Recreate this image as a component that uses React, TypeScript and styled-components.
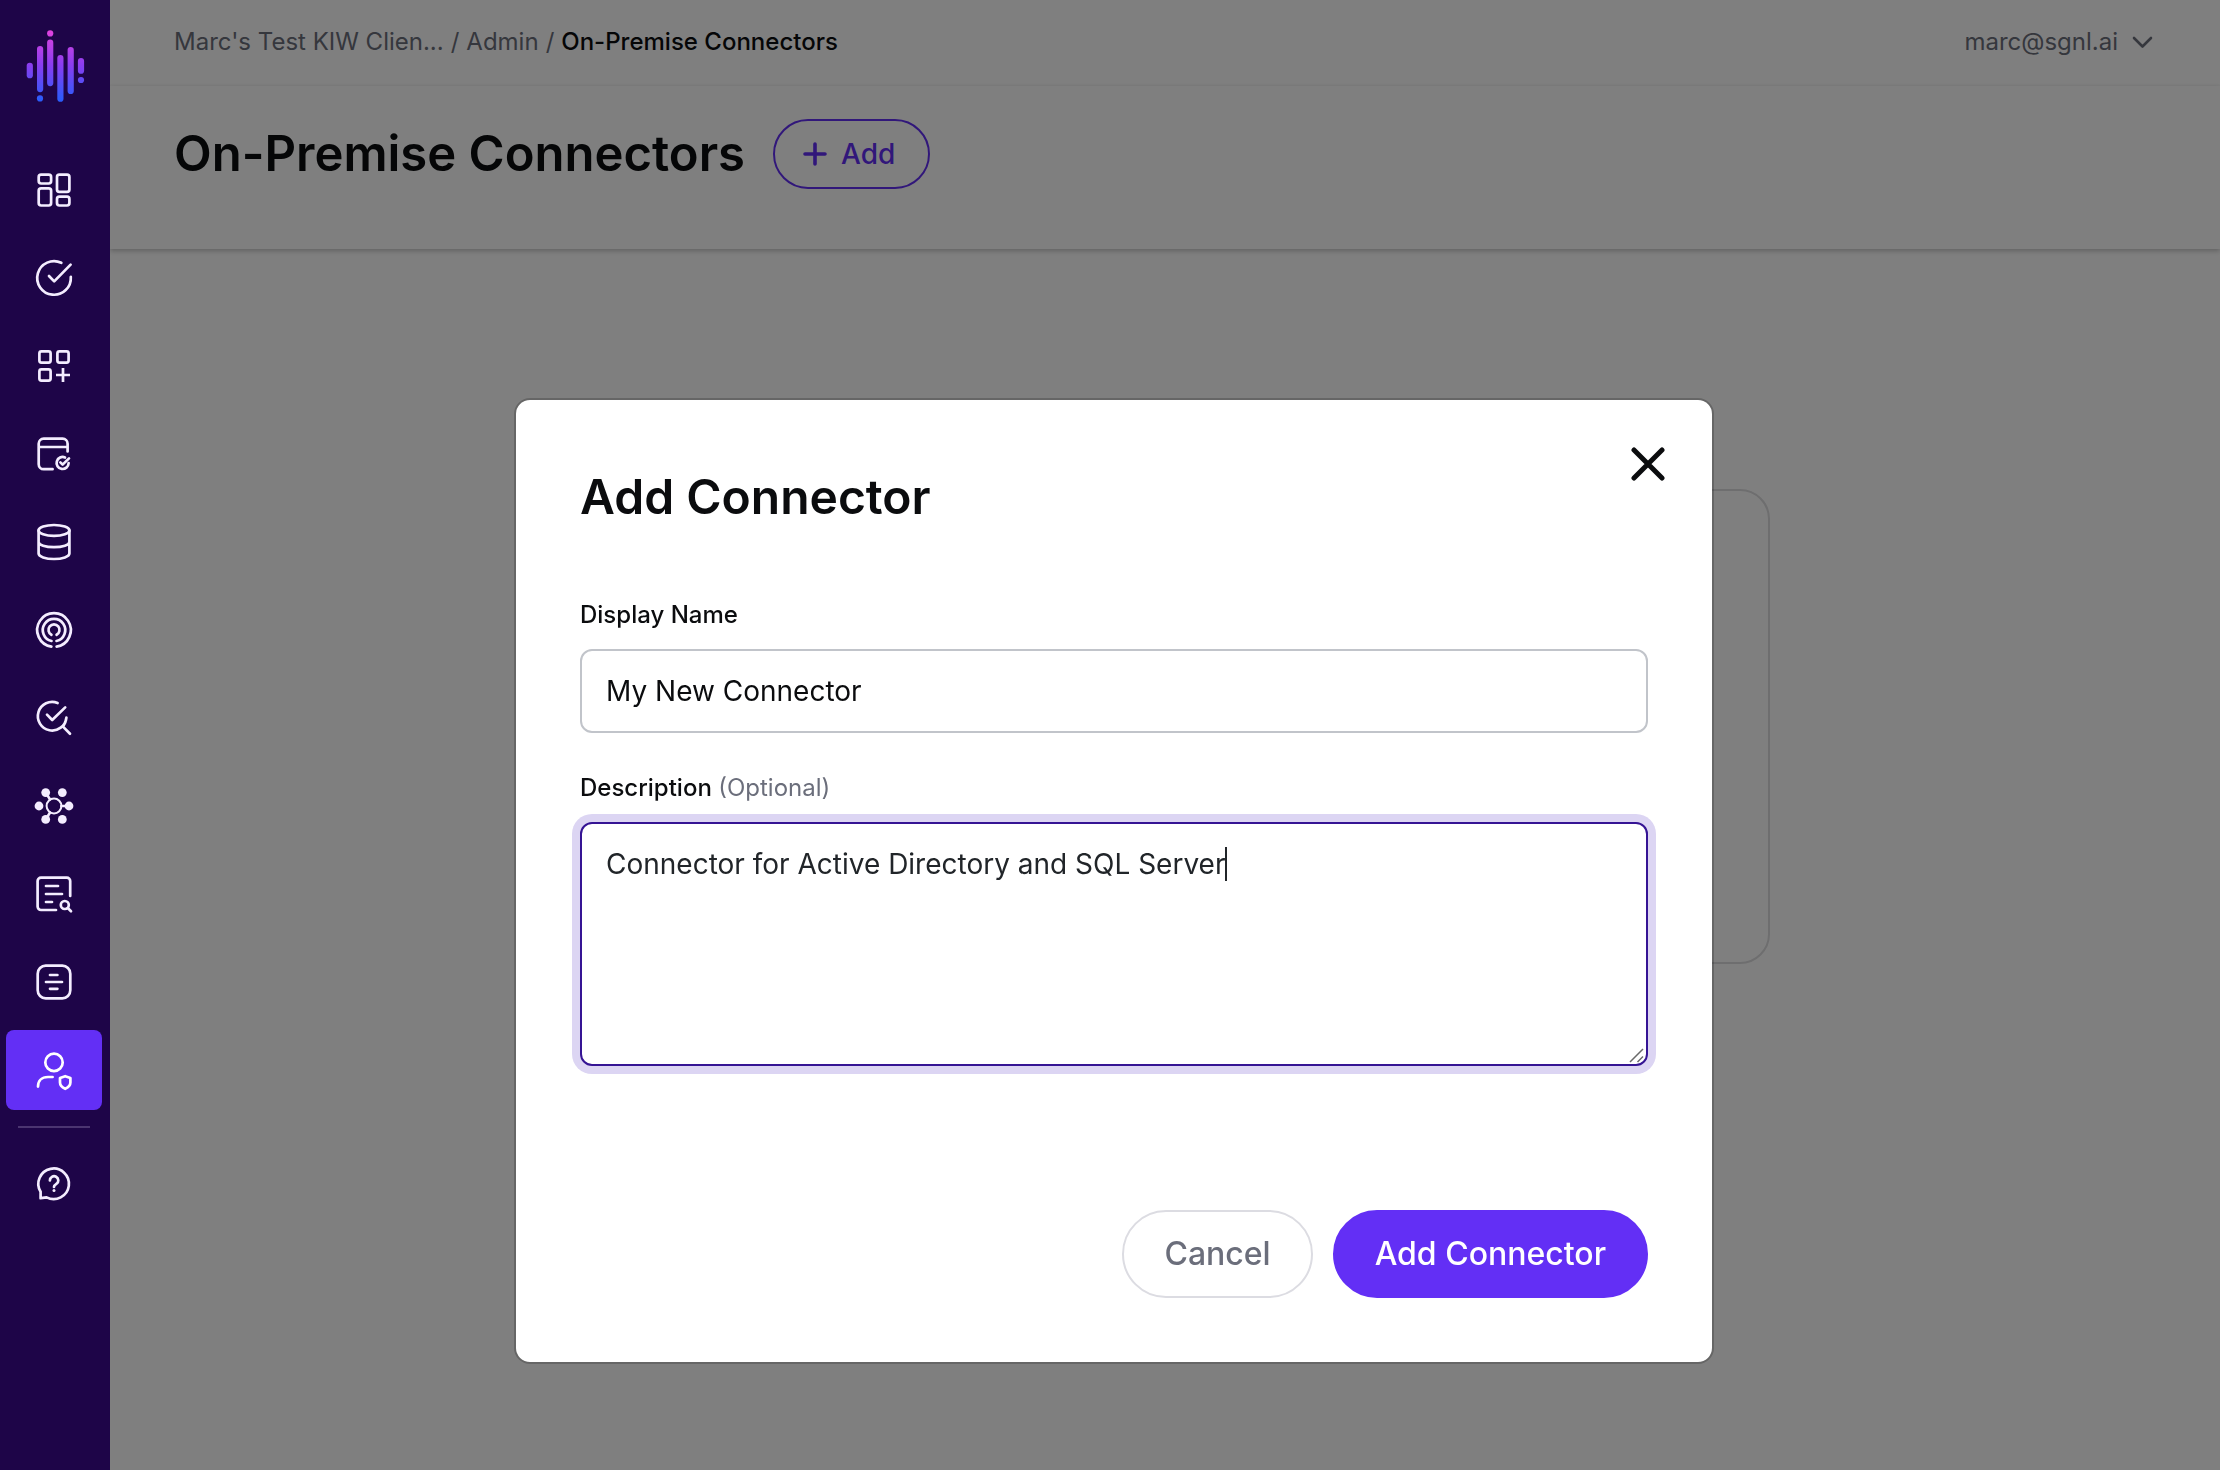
import React, { useLayoutEffect, useRef, useState } from "react";
import styled, { createGlobalStyle } from "styled-components";

const color = {
  ink: "#0b0c0e",
  muted: "#6b6e7b",
  primary: "#632ff5",
  focus: "#351494",
  focusRing: "#dcd5f3",
  nav: "#1e0548",
  navIcon: "#f4edff",
  line: "#c1c4ca",
};

const GlobalStyle = createGlobalStyle`
  *, *::before, *::after { box-sizing: border-box; }
  body {
    margin: 0;
    background: #fff;
    color: ${color.ink};
    font-family: Inter, "Liberation Sans", sans-serif;
  }
  button, input, textarea { font-family: inherit; }
`;

const Shell = styled.div`
  display: flex;
  min-height: 100vh;
`;

const Sidebar = styled.nav`
  position: relative;
  z-index: 2;
  flex: none;
  display: flex;
  flex-direction: column;
  width: 110px;
  padding: 30px 8px 32px 6px;
  background: ${color.nav};
`;

const Brand = styled.a`
  display: flex;
  justify-content: center;
  height: 120px;
  padding-left: 2px;
`;

const NavList = styled.ul`
  display: flex;
  flex-direction: column;
  gap: 8px;
  margin: 0;
  padding: 0;
  list-style: none;
`;

const NavLink = styled.a<{ $active?: boolean }>`
  display: flex;
  align-items: center;
  justify-content: center;
  height: 80px;
  border-radius: 8px;
  background: ${(p) => (p.$active ? color.primary : "transparent")};
  color: ${(p) => (p.$active ? "#fff" : color.navIcon)};
`;

const NavDivider = styled.hr`
  width: 72px;
  height: 2px;
  margin: 16px auto;
  border: 0;
  background: #4b3570;
`;

const Page = styled.div`
  flex: 1;
  min-width: 0;
  display: flex;
  flex-direction: column;
`;

const TopBar = styled.div`
  display: flex;
  align-items: center;
  justify-content: space-between;
  height: 86px;
  padding: 0 64px;
  border-bottom: 2px solid #fdfdfd;
  font-size: 24px;
  line-height: 32px;
`;

const Crumbs = styled.ol`
  display: flex;
  gap: 7px;
  margin: 0;
  padding: 0;
  list-style: none;
  color: ${color.muted};
`;

const CrumbItem = styled.li`
  display: flex;
  gap: 7px;

  & + &::before {
    content: "/";
  }
`;

const CrumbLink = styled.a<{ $current?: boolean }>`
  color: ${(p) => (p.$current ? color.ink : color.muted)};
  font-weight: ${(p) => (p.$current ? 500 : 400)};
  text-decoration: none;
`;

const AccountButton = styled.button`
  display: flex;
  align-items: center;
  gap: 12px;
  padding: 0;
  border: 0;
  background: none;
  color: ${color.muted};
  font-size: 24px;
  line-height: 32px;
`;

const PageHeader = styled.header`
  display: flex;
  align-items: center;
  gap: 28px;
  padding: 32px 64px 59px;
  box-shadow: 0 2px 5px rgba(0, 0, 0, 0.24);
`;

const PageTitle = styled.h1`
  margin: 0;
  font-size: 49px;
  line-height: 72px;
  font-weight: 600;
`;

const OutlineButton = styled.button`
  display: flex;
  align-items: center;
  gap: 14px;
  height: 70px;
  padding: 0 33px 0 28px;
  border: 2px solid ${color.primary};
  border-radius: 35px;
  background: none;
  color: ${color.primary};
  font-size: 28px;
  font-weight: 500;
`;

const Content = styled.main`
  flex: 1;
  padding: 240px 64px 64px;
`;

const EmptyCard = styled.section`
  max-width: 1210px;
  height: 475px;
  margin: 0 auto;
  border: 2px solid #dcdcde;
  border-radius: 30px;
`;

const Overlay = styled.div`
  position: fixed;
  inset: 0;
  z-index: 1;
  display: flex;
  align-items: flex-start;
  justify-content: center;
  padding: 398px 0 0 8px;
  overflow: auto;
  background: rgba(0, 0, 0, 0.5);
`;

const Dialog = styled.form`
  width: 1200px;
  max-width: 100%;
  border: 2px solid rgba(0, 0, 0, 0.2);
  border-radius: 16px;
  background: #fff;
  background-clip: padding-box;
`;

const DialogHeader = styled.div`
  display: flex;
  align-items: flex-start;
  justify-content: space-between;
  padding: 32px 32px 0 64px;
`;

const DialogTitle = styled.h2`
  margin: 32px 0 0;
  font-size: 48px;
  line-height: 66px;
  font-weight: 600;
`;

const CloseButton = styled.button`
  display: grid;
  place-items: center;
  width: 64px;
  height: 64px;
  padding: 0;
  border: 0;
  background: none;
  color: ${color.ink};
`;

const DialogBody = styled.div`
  display: flex;
  flex-direction: column;
  gap: 36px;
  padding: 66px 64px 0;
`;

const Field = styled.div`
  display: flex;
  flex-direction: column;
  gap: 15px;
`;

const Label = styled.label`
  font-size: 24px;
  line-height: 38px;
  font-weight: 500;
`;

const Hint = styled.span`
  color: ${color.muted};
  font-weight: 400;
`;

const TextInput = styled.input`
  width: 100%;
  height: 84px;
  padding: 0 24px;
  border: 2px solid ${color.line};
  border-radius: 12px;
  background: #fff;
  color: ${color.ink};
  font-size: 28px;
  outline: none;
`;

const AreaWrap = styled.div`
  position: relative;
  display: flex;
`;

const TextArea = styled.textarea`
  width: 100%;
  height: 244px;
  padding: 20px 24px;
  border: 2px solid ${color.focus};
  border-radius: 12px;
  background: #fff;
  box-shadow: 0 0 0 8px ${color.focusRing};
  color: #212529;
  caret-color: transparent;
  font-size: 28px;
  line-height: 40px;
  outline: none;
  resize: none;
`;

const Caret = styled.span`
  position: absolute;
  top: 25px;
  width: 2px;
  height: 34px;
  background: #212529;
`;

const Grip = styled.svg`
  position: absolute;
  right: 3px;
  bottom: 3px;
  pointer-events: none;
`;

const DialogFooter = styled.div`
  display: flex;
  justify-content: flex-end;
  gap: 20px;
  padding: 144px 64px 64px;
`;

const PillButton = styled.button<{ $primary?: boolean }>`
  height: 88px;
  padding: 0 40px 2px;
  border: 2px solid ${(p) => (p.$primary ? color.primary : "#dcdce2")};
  border-radius: 44px;
  background: ${(p) => (p.$primary ? color.primary : "#fff")};
  color: ${(p) => (p.$primary ? "#fff" : color.muted)};
  font-size: 32px;
  font-weight: 500;
`;

const Logo = () => (
  <svg width="60" height="74" viewBox="25 30 60 74" aria-hidden="true">
    <defs>
      <linearGradient id="brand" gradientUnits="userSpaceOnUse" x1="0" y1="30" x2="0" y2="100">
        <stop offset="0" stopColor="#e243de" />
        <stop offset="0.5" stopColor="#8a3df0" />
        <stop offset="1" stopColor="#2a5cfb" />
      </linearGradient>
    </defs>
    <g fill="url(#brand)">
      <rect x="26.7" y="62.7" width="6.2" height="15.6" rx="3.1" />
      <rect x="37" y="46" width="6.2" height="46.2" rx="3.1" />
      <circle cx="40" cy="98.4" r="3.1" />
      <circle cx="50.2" cy="33.4" r="3.1" />
      <rect x="47.1" y="39.6" width="6.2" height="46.6" rx="3.1" />
      <rect x="57.3" y="55" width="6.2" height="46.8" rx="3.1" />
      <rect x="67.6" y="47" width="6.2" height="47" rx="3.1" />
      <rect x="77.9" y="58" width="6.2" height="15.8" rx="3.1" />
      <circle cx="81" cy="80" r="3.1" />
    </g>
  </svg>
);

const Dot = ({ x, y }: { x: number; y: number }) => (
  <circle cx={x} cy={y} r="4.4" fill="currentColor" stroke="none" />
);

const navItems = [
  {
    label: "Dashboard",
    art: (
      <>
        <rect x="8.7" y="8.7" width="12.4" height="8.8" rx="2.4" />
        <rect x="27" y="8.7" width="12.4" height="17.2" rx="2.4" />
        <rect x="8.7" y="22.3" width="12.4" height="17.2" rx="2.4" />
        <rect x="27" y="30.7" width="12.4" height="8.8" rx="2.4" />
      </>
    ),
  },
  {
    label: "Policies",
    art: (
      <>
        <path d="M31.3 8.8A16.8 16.8 0 1 0 40.8 22.8" />
        <path d="M19 22l5.2 5.4L40.6 10.6" />
      </>
    ),
  },
  {
    label: "Snippets",
    art: (
      <>
        <rect x="9.4" y="9.4" width="11.2" height="11.2" rx="2" />
        <rect x="27.4" y="9.4" width="11.2" height="11.2" rx="2" />
        <rect x="9.4" y="27.4" width="11.2" height="11.2" rx="2" />
        <path d="M33 26v14M26 33h14" strokeLinecap="butt" />
      </>
    ),
  },
  {
    label: "Protected systems",
    art: (
      <>
        <path d="M37.6 21.4V13.7a5 5 0 0 0-5-5H13.7a5 5 0 0 0-5 5V34.2a5 5 0 0 0 5 5H22.6M8.7 17H37.6" />
        <path d="M35 27.5A6 6 0 1 0 38.6 33.2M30.4 32.4l2.2 2.2 6.4-6.2" />
      </>
    ),
  },
  {
    label: "Data sources",
    art: (
      <>
        <ellipse cx="24" cy="12.4" rx="15.4" ry="5.4" />
        <path d="M8.6 12.4V35.6c0 3 6.9 5.4 15.4 5.4s15.4-2.4 15.4-5.4V12.4M8.6 24c0 3 6.9 5.2 15.4 5.2s15.4-2.2 15.4-5.2" />
      </>
    ),
  },
  {
    label: "Signals",
    art: (
      <>
        <path d="M21.4 40.6a16.8 16.8 0 1 1 5.2 0" />
        <path d="M21.5 35a11.2 11.2 0 1 1 5 0" />
        <path d="M21.4 28.8a5.5 5.5 0 1 1 5.2 0" />
      </>
    ),
  },
  {
    label: "Access search",
    art: (
      <>
        <path d="M27.6 9A14.3 14.3 0 1 0 36.4 23.6M36.4 23.6Q35.8 29 33 32.6L40 39.8" />
        <path d="M17 20.6l5.2 5.4L35.2 13.4" />
      </>
    ),
  },
  {
    label: "Graph",
    art: (
      <>
        <circle cx="24" cy="24" r="7.4" strokeWidth="2" />
        <path d="M15.7 10.6L20 17.4M15.7 37.4L20 30.6M31.4 24H39" />
        <Dot x={9} y={24} />
        <Dot x={39} y={24} />
        <Dot x={15.7} y={10.6} />
        <Dot x={32.3} y={10.6} />
        <Dot x={15.7} y={37.4} />
        <Dot x={32.3} y={37.4} />
      </>
    ),
  },
  {
    label: "Reports",
    art: (
      <>
        <path d="M40.2 26V11a3.4 3.4 0 0 0-3.4-3.4H11A3.4 3.4 0 0 0 7.6 11V36.6A3.4 3.4 0 0 0 11 40H26" />
        <path d="M16 16H28M16 24H32M16 32H22" />
        <circle cx="34.8" cy="35" r="4" />
        <path d="M37.8 38L41 41.2" />
      </>
    ),
  },
  {
    label: "Logs",
    art: (
      <>
        <rect x="7.7" y="7.7" width="32.6" height="32.6" rx="8" />
        <path d="M20 17H27.4M16 24H32M20 30.8H27.4" />
      </>
    ),
  },
  {
    label: "Admin",
    active: true,
    art: (
      <>
        <circle cx="24" cy="16.4" r="8.7" />
        <path d="M8 40.6C8 35 11.6 31 18 31H22.6" />
        <path d="M35.2 30.2l5.2 1.8v4.6c0 3-2.2 4.8-5.2 6.2-3-1.4-5.2-3.2-5.2-6.2v-4.6z" />
      </>
    ),
  },
];

const NavIcon = ({ children }: { children: React.ReactNode }) => (
  <svg
    width="48"
    height="48"
    viewBox="0 0 48 48"
    fill="none"
    stroke="currentColor"
    strokeWidth="2.7"
    strokeLinecap="round"
    strokeLinejoin="round"
    aria-hidden="true"
  >
    {children}
  </svg>
);

export default function App() {
  const [name, setName] = useState("My New Connector");
  const [description, setDescription] = useState("Connector for Active Directory and SQL Server");
  const areaRef = useRef<HTMLTextAreaElement>(null);
  const [caretX, setCaretX] = useState(26);

  // The caret sits after the text typed so far, measured in the field's own font.
  useLayoutEffect(() => {
    const area = areaRef.current;
    const context = document.createElement("canvas").getContext("2d");
    if (!area || !context) return;
    const style = getComputedStyle(area);
    context.font = `${style.fontWeight} ${style.fontSize} ${style.fontFamily}`;
    setCaretX(26 + Math.round(context.measureText(description).width));
  }, [description]);

  return (
    <>
      <GlobalStyle />
      <Shell>
        <Sidebar aria-label="Main">
          <Brand href="#" aria-label="Home">
            <Logo />
          </Brand>
          <NavList>
            {navItems.map((item) => (
              <li key={item.label}>
                <NavLink href="#" aria-label={item.label} $active={item.active}>
                  <NavIcon>{item.art}</NavIcon>
                </NavLink>
              </li>
            ))}
          </NavList>
          <NavDivider />
          <NavLink href="#" aria-label="Help">
            <NavIcon>
              <path d="M10.6 31.8A15.3 15.3 0 1 1 16.6 37.4L10.6 38.2Z" />
              <path d="M19.9 20.4a4.2 4.2 0 1 1 6.5 3.5c-1.5 1-2.4 1.6-2.4 3" />
              <circle cx="24" cy="30.5" r="1.5" fill="currentColor" stroke="none" />
            </NavIcon>
          </NavLink>
        </Sidebar>

        <Page>
          <TopBar>
            <Crumbs>
              <CrumbItem>
                <CrumbLink href="#">Marc's Test KIW Clien...</CrumbLink>
              </CrumbItem>
              <CrumbItem>
                <CrumbLink href="#">Admin</CrumbLink>
              </CrumbItem>
              <CrumbItem>
                <CrumbLink href="#" $current>
                  On-Premise Connectors
                </CrumbLink>
              </CrumbItem>
            </Crumbs>
            <AccountButton type="button">
              marc@sgnl.ai
              <svg width="26" height="26" viewBox="0 0 26 26" fill="none" stroke="currentColor" strokeWidth="2.6" strokeLinecap="round" strokeLinejoin="round" aria-hidden="true">
                <path d="M4 9l8.5 8.5L21 9" />
              </svg>
            </AccountButton>
          </TopBar>

          <PageHeader>
            <PageTitle>On-Premise Connectors</PageTitle>
            <OutlineButton type="button">
              <svg width="24" height="24" viewBox="0 0 24 24" stroke="currentColor" strokeWidth="3.6" strokeLinecap="round" aria-hidden="true">
                <path d="M12 2v20M2 12h20" />
              </svg>
              Add
            </OutlineButton>
          </PageHeader>

          <Content>
            <EmptyCard />
          </Content>
        </Page>
      </Shell>

      <Overlay>
        <Dialog role="dialog" aria-modal="true" aria-labelledby="dialog-title" onSubmit={(e) => e.preventDefault()}>
          <DialogHeader>
            <DialogTitle id="dialog-title">Add Connector</DialogTitle>
            <CloseButton type="button" aria-label="Close">
              <svg width="34" height="34" viewBox="0 0 34 34" stroke="currentColor" strokeWidth="5" strokeLinecap="round" aria-hidden="true">
                <path d="M3 3l28 28M31 3L3 31" />
              </svg>
            </CloseButton>
          </DialogHeader>
          <DialogBody>
            <Field>
              <Label htmlFor="display-name">Display Name</Label>
              <TextInput id="display-name" value={name} onChange={(e) => setName(e.target.value)} />
            </Field>
            <Field>
              <Label htmlFor="description">
                Description <Hint>(Optional)</Hint>
              </Label>
              <AreaWrap>
                <TextArea
                  id="description"
                  ref={areaRef}
                  value={description}
                  onChange={(e) => setDescription(e.target.value)}
                />
                <Caret style={{ left: caretX }} />
                <Grip width="16" height="16" viewBox="0 0 16 16" stroke="#6a6a6a" strokeWidth="1.5" aria-hidden="true">
                  <path d="M1 15L14 2M8.5 15L14 9.5" />
                </Grip>
              </AreaWrap>
            </Field>
          </DialogBody>
          <DialogFooter>
            <PillButton type="button">Cancel</PillButton>
            <PillButton type="submit" $primary>
              Add Connector
            </PillButton>
          </DialogFooter>
        </Dialog>
      </Overlay>
    </>
  );
}
